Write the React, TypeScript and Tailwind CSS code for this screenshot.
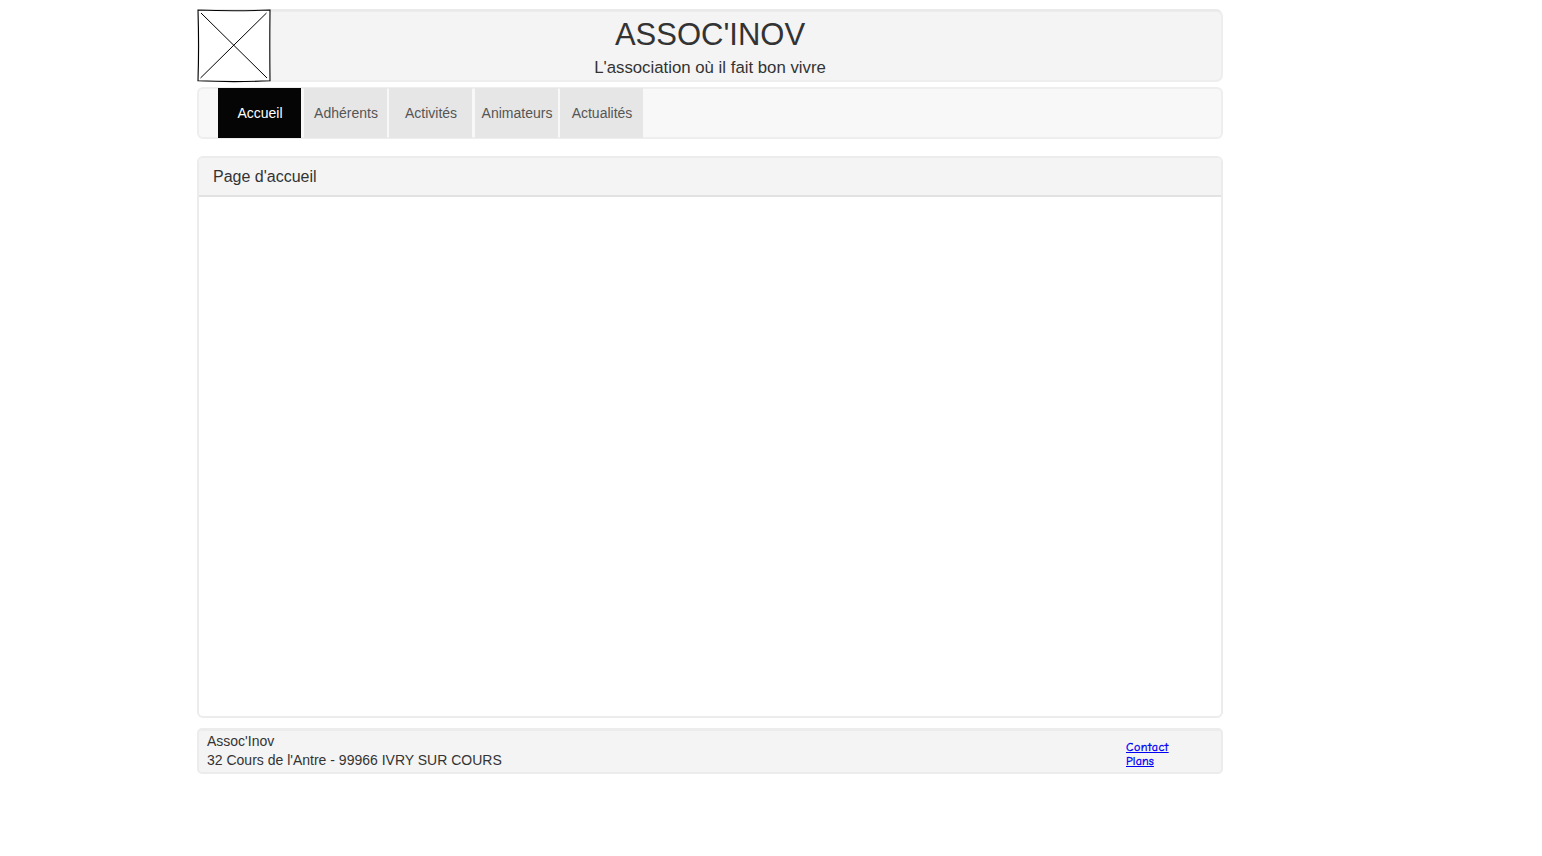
import React from "react";

const tabs = [
  { label: "Accueil", className: "w-[83px] mr-[3px] bg-[#050505] text-white" },
  { label: "Adhérents", className: "w-[83px] mr-[2px] bg-[#e6e6e6] text-[#555]" },
  { label: "Activités", className: "w-[83px] mr-[3px] bg-[#e6e6e6] text-[#555]" },
  { label: "Animateurs", className: "w-[83px] mr-[2px] bg-[#e6e6e6] text-[#555]" },
  { label: "Actualités", className: "w-[83px] bg-[#e6e6e6] text-[#555]" },
];

function LogoPlaceholder() {
  return (
    <svg className="absolute -left-[2px] -top-[2px]" width="76" height="76" viewBox="0 0 76 76" fill="none" stroke="#000">
      <path d="M1 1Q37 2.4 73 1Q72.6 37 73 71.8Q37 73.4 1 71.8Q2.2 37 1 1Z" fill="#fff" strokeWidth="1.1" />
      <path d="M4 4L70 69M69.5 4L3.5 69" strokeWidth="1" />
    </svg>
  );
}

export default function App() {
  return (
    <div className="min-h-[856px] bg-white pt-[9px] pl-[197px] font-['Liberation_Sans',Arial,sans-serif] text-[#333]">
      <div className="w-[1026px]">
        <header className="relative h-[73px] rounded-[7px] border-2 border-[#eee] border-t-[#e9e9e9] bg-[#f4f4f4] text-center shadow-[inset_0_1px_0_rgba(0,0,0,0.03)]">
          <LogoPlaceholder />
          <h1 className="pt-[6px] text-[31px] leading-[36px]">ASSOC'INOV</h1>
          <p className="pt-[5px] text-[16.8px] leading-[20px]">L'association où il fait bon vivre</p>
        </header>

        <nav className="mt-[5px] flex h-[52px] rounded-[6px] border-2 border-[#eee] bg-[#f8f8f8] pl-[19px] text-[14px]">
          {tabs.map((tab) => (
            <a key={tab.label} className={`-my-px flex h-[50px] shrink-0 items-center justify-center pl-px ${tab.className}`}>
              {tab.label}
            </a>
          ))}
        </nav>

        <main className="mt-[17px] h-[562px] rounded-[6px] border-2 border-[#ececec]">
          <h2 className="h-[39px] rounded-t-[4px] border-b-2 border-[#e2e2e2] bg-[#f4f4f4] pl-[14px] text-[16px] leading-[37px]">
            Page d'accueil
          </h2>
        </main>

        <footer className="mt-[10px] flex h-[46px] justify-between rounded-[5px] border-2 border-[#ececec] bg-[#f4f4f4] pr-[52px] pl-[8px] shadow-[inset_0_1px_0_rgba(0,0,0,0.03)]">
          <div className="pt-[2px] text-[14px] leading-[19px]">
            <p>Assoc'Inov</p>
            <p>32 Cours de l'Antre - 99966 IVRY SUR COURS</p>
          </div>
          <div className="flex w-[43px] flex-col items-start pt-[10px] font-['Comic_Neue','Comic_Sans_MS',cursive] text-[12px] leading-[14px] text-[#0000f5] [-webkit-text-stroke:0.35px_#0000f5]">
            <a className="tracking-[0.55px] underline">Contact</a>
            <a className="tracking-[0.15px] underline">Plans</a>
          </div>
        </footer>
      </div>
    </div>
  );
}
